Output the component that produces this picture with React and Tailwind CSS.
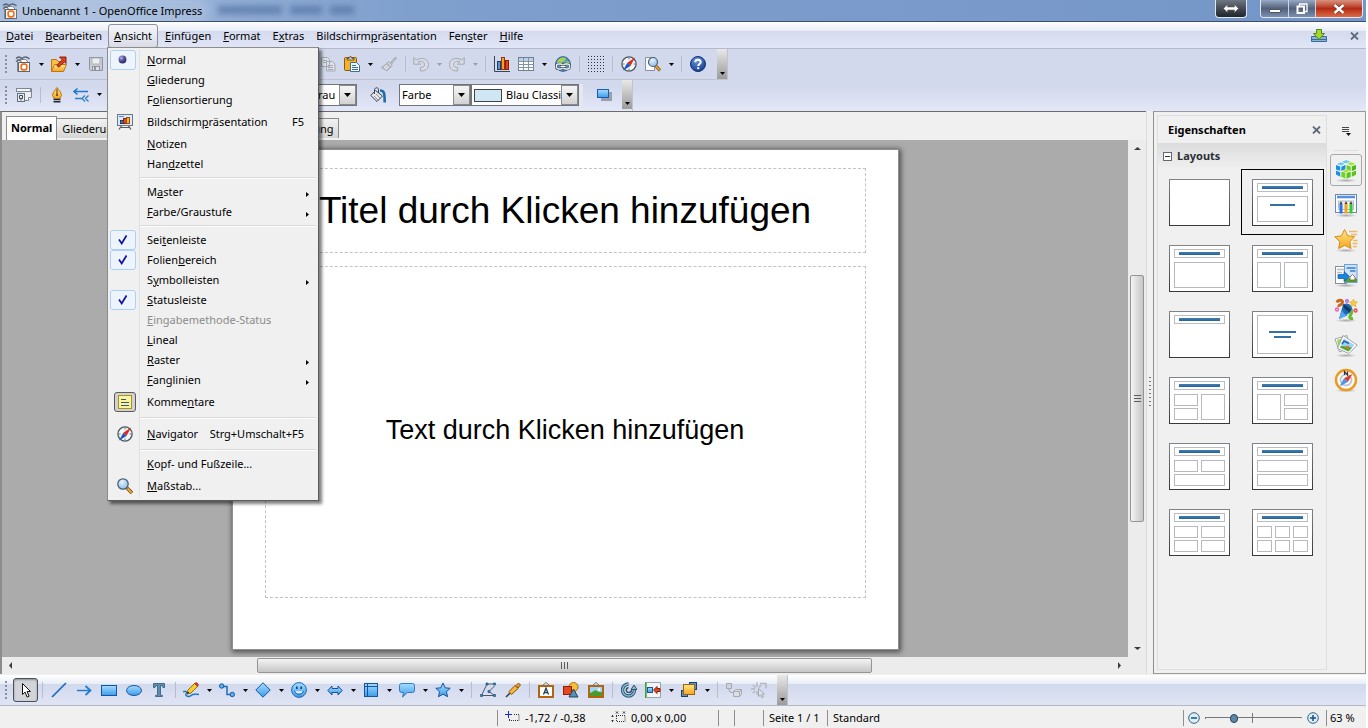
import React from "react";

/* ---------- icon helper ---------- */
function Svg({ s = 16, vb = 16, children, className = "" }) {
  return (
    <svg width={s} height={s} viewBox={`0 0 ${vb} ${vb}`} fill="none" aria-hidden="true" className={"shrink-0 " + className}>
      {children}
    </svg>
  );
}

function Defs() {
  return (
    <svg width="0" height="0" className="absolute" aria-hidden="true">
      <defs>
        <linearGradient id="blue" x1="0" y1="0" x2="0" y2="1">
          <stop offset="0" stopColor="#a5dcff" />
          <stop offset="1" stopColor="#3d9ceb" />
        </linearGradient>
        <linearGradient id="bar" x1="0" y1="0" x2="0" y2="1">
          <stop offset="0" stopColor="#3f7fb5" />
          <stop offset="1" stopColor="#2a6395" />
        </linearGradient>
        <linearGradient id="frame" x1="0" y1="0" x2="0" y2="1">
          <stop offset="0" stopColor="#808488" />
          <stop offset="1" stopColor="#38393b" />
        </linearGradient>
        <linearGradient id="gold" x1="0" y1="0" x2="0" y2="1">
          <stop offset="0" stopColor="#ffe78a" />
          <stop offset="1" stopColor="#f5a61c" />
        </linearGradient>
        <radialGradient id="ball" cx="0.35" cy="0.3" r="0.7">
          <stop offset="0" stopColor="#b9b9ee" />
          <stop offset="0.5" stopColor="#5656a0" />
          <stop offset="1" stopColor="#2a2a66" />
        </radialGradient>
        <radialGradient id="helpball" cx="0.4" cy="0.25" r="0.8">
          <stop offset="0" stopColor="#6a94dc" />
          <stop offset="1" stopColor="#123a8c" />
        </radialGradient>
        <radialGradient id="glass" cx="0.4" cy="0.3" r="0.8">
          <stop offset="0" stopColor="#e6f5ff" />
          <stop offset="1" stopColor="#82b6e4" />
        </radialGradient>
        <radialGradient id="floor">
          <stop offset="0" stopColor="#8a8a8a" stopOpacity="0.7" />
          <stop offset="1" stopColor="#8a8a8a" stopOpacity="0" />
        </radialGradient>
      </defs>
    </svg>
  );
}

const AppIcon = () => (
  <Svg>
    <path d="M2.500 3.500h8l3 3v9h-11z" fill="#fff" stroke="#7b8794" />
    <path d="M1 2.500C3 .5 5 .8 7 2.600 9 .6 12 .8 14.500 2.800" stroke="#5a6672" strokeWidth="1.500" />
    <path d="M1 5.500c2-1.500 4-1.200 5.500 0" stroke="#5a6672" strokeWidth="1.200" />
    <rect x="3.500" y="6.500" width="11" height="9" fill="#fdf0e6" stroke="#5b6670" />
    <rect x="6.200" y="8.200" width="5.600" height="5.600" rx="2" fill="#fff" stroke="#e8731c" strokeWidth="1.700" />
  </Svg>
);
const OpenIcon = () => (
  <Svg>
    <path d="M.5 15.500v-12h5l1.500 2h5v10z" fill="#f7c242" stroke="#b9761a" />
    <path d="M.5 15.500l3-7h12l-3 7z" fill="url(#gold)" stroke="#b9761a" />
    <path d="M6.500 10.500L12 5" stroke="#8f1d0a" strokeWidth="3.400" />
    <path d="M8.500 1h6.500v6.500z" fill="#e0401e" stroke="#8f1d0a" />
    <path d="M7 10l5.500-5.500" stroke="#e0401e" strokeWidth="1.800" />
  </Svg>
);
const SaveIcon = () => (
  <Svg>
    <path d="M1.500 1.500h13v13h-12l-1-1z" fill="#c9ccd3" stroke="#8e939c" />
    <rect x="4" y="2" width="8" height="6" fill="#eceef2" stroke="#9ba0a8" strokeWidth=".7" />
    <rect x="4.500" y="10.500" width="7" height="4" fill="#dfe1e7" stroke="#8e939c" />
    <rect x="6" y="11" width="2" height="3" fill="#8e939c" />
  </Svg>
);
const CopyIcon = () => (
  <Svg>
    <path d="M1.500 1.500h6l2 2v7h-8zM6.500 5.500h6l2.500 2.500v7h-8.500z" fill="#dde0e8" stroke="#a4a9b3" />
    <path d="M8 9.500h5M8 11.500h5M8 13.500h5M3 4.500h4M3 6.500h3" stroke="#a4a9b3" />
  </Svg>
);
const PasteIcon = () => (
  <Svg>
    <rect x=".5" y="1.500" width="12" height="13" rx="1" fill="#f3b22c" stroke="#8c5a10" />
    <path d="M3 4V2.500h2L6.500 0 8 2.500h2V4z" fill="#dcd6c6" stroke="#4a4436" strokeWidth=".8" />
    <path d="M6.500 6.500h6l3 3v6h-9z" fill="#eef5fc" stroke="#44708f" />
    <path d="M8 9.500h4M8 11.500h6M8 13.500h6" stroke="#3f6f9c" />
  </Svg>
);
const BrushIcon = () => (
  <Svg>
    <path d="M10 6l4.500-5 1 1L11 7.500z" fill="#c6c9d0" stroke="#9fa4ad" />
    <path d="M7.500 5.500l4 4-2 1.500-3.500-3.500z" fill="#d6d8de" stroke="#9fa4ad" />
    <path d="M6 7.500L9.500 11 6 15 .5 11.500z" fill="#c6c9d0" stroke="#9fa4ad" />
    <path d="M3 12l3-3M4.500 13.500l3-3" stroke="#eef0f4" />
  </Svg>
);
const UndoIcon = ({ flip }) => (
  <Svg className={flip ? "-scale-x-100" : ""}>
    <path d="M.8 1.500v6.700h6.700L5 5.800c3.500-1.300 6.500 0 6.500 2.700 0 2-1.300 3-4 3v3.500c5 .2 8-2.500 8-6.500C15.500 3 9 .5 3.200 4z" fill="#d9dce3" stroke="#a3a8b2" />
  </Svg>
);
const ChartIcon = () => (
  <Svg>
    <path d="M.5 0v15.500H16" stroke="#3a4652" />
    <rect x="3.500" y="5.500" width="3" height="8" fill="#5a98cc" stroke="#173f66" />
    <rect x="7.500" y="1.500" width="3" height="12" fill="#f5a12a" stroke="#9b3210" />
    <rect x="11.500" y="4.500" width="3" height="9" fill="#e2461c" stroke="#8a200a" />
  </Svg>
);
const TableIcon = () => (
  <Svg>
    <rect x=".5" y="1.500" width="15" height="13" fill="#fff" stroke="#708090" />
    <path d="M1 3.500h14" stroke="#b9d2ea" strokeWidth="3" />
    <path d="M0 5.500h16M0 8.500h16M0 11.500h16M5.500 2v12M10.500 2v12" stroke="#8494a4" />
  </Svg>
);
const LinkIcon = () => (
  <Svg>
    <circle cx="8" cy="8" r="7.300" fill="#4b93d6" stroke="#2a5a8c" />
    <path d="M2 6c1-4 6-5.500 9-4l-1 3-3 1-1 3H3zM11 5l3.500 1v4l-4-1z" fill="#a8d24a" />
    <rect x="1.500" y="8" width="6" height="5" rx="2" stroke="#3c4850" strokeWidth="2.600" />
    <rect x="8.500" y="8" width="6" height="5" rx="2" stroke="#3c4850" strokeWidth="2.600" />
    <rect x="1.500" y="8" width="6" height="5" rx="2" stroke="#eef2f4" strokeWidth="1.300" />
    <rect x="8.500" y="8" width="6" height="5" rx="2" stroke="#eef2f4" strokeWidth="1.300" />
    <path d="M5 10.500h6" stroke="#3c4850" strokeWidth="2.400" />
    <path d="M5.500 10.500h5" stroke="#fff" strokeWidth="1.200" />
  </Svg>
);
const GridIcon = () => (
  <Svg>
    {[0, 1, 2, 3, 4, 5].map((r) => (
      <path key={r} d={`M0 ${r * 3 + 0.5}h16`} stroke="#30343c" strokeDasharray="1 2" />
    ))}
  </Svg>
);
const CompassIcon = () => (
  <Svg>
    <circle cx="8" cy="8" r="7.100" fill="#f4f7fa" stroke="#4e565e" strokeWidth="1.300" />
    <path d="M8 1.500v2M8 12.500v2M1.500 8h2M12.500 8h2" stroke="#6d7780" />
    <path d="M14 1.500L9.500 10 6.300 6.700z" fill="#e02a1c" />
    <path d="M2 14.500L9.500 10 6.300 6.700z" fill="#1f57c4" />
  </Svg>
);
const ZoomPageIcon = () => (
  <Svg>
    <path d="M.5 1.500h9v13H.5z" fill="#fafbfd" stroke="#8a939d" />
    <path d="M10.500 9.500l4.500 5" stroke="#7a4a0c" strokeWidth="3" />
    <path d="M10.500 9.500l4.300 4.800" stroke="#f0ac34" strokeWidth="1.600" />
    <circle cx="8" cy="6" r="4.500" fill="url(#glass)" stroke="#4b6076" strokeWidth="1.200" />
  </Svg>
);
const MagnifierIcon = () => (
  <Svg>
    <path d="M10 10l5 5" stroke="#7a4a0c" strokeWidth="3.400" />
    <path d="M10.500 10.500l4.300 4.300" stroke="#f0ac34" strokeWidth="1.800" />
    <circle cx="6" cy="6" r="5.200" fill="url(#glass)" stroke="#4b5f73" strokeWidth="1.300" />
  </Svg>
);
const HelpIcon = () => (
  <Svg>
    <circle cx="8" cy="8" r="7.500" fill="url(#helpball)" stroke="#0f2f78" />
    <path d="M5.300 6.200C5.400 3 10.800 3 10.700 6.200 10.600 8 8.200 8 8.200 10" stroke="#fff" strokeWidth="2" />
    <rect x="7.200" y="11.200" width="2" height="2" fill="#fff" />
  </Svg>
);
const StylesIcon = () => (
  <Svg>
    <path d="M5 3.500V1.500h10.500v9l-3 3H9" fill="#eef0f3" stroke="#7e8894" />
    <path d="M12.500 13.500v-3h3" fill="#fff" stroke="#7e8894" />
    <rect x=".5" y="1.500" width="14" height="3" fill="#f7f8fa" stroke="#7e8894" />
    <rect x="1.500" y="6.500" width="7" height="8" fill="#e6eaef" stroke="#66717e" />
    <path d="M3.500 8.500h3v3h-3zM5 11v2.500" stroke="#3f4c5a" />
  </Svg>
);
const PenIcon = () => (
  <Svg>
    <path d="M8 .5C6 3 3.500 6 3.500 8.500L5.500 12h5l2-3.500C12.500 6 10 3 8 .5z" fill="url(#gold)" stroke="#b8760c" />
    <path d="M8 2v5" stroke="#5a3a08" />
    <circle cx="8" cy="8" r="1" fill="#5a3a08" />
    <path d="M4.500 12.500h7M4.500 14.700h7" stroke="#1f2a3a" strokeWidth="1.600" />
  </Svg>
);
const ArrowsIcon = () => (
  <Svg>
    <path d="M2 4.500h13M4.500 1.500l-3.500 3 3.500 3" stroke="#1f78c8" strokeWidth="1.500" />
    <path d="M2 11.500h8M12 8.500l-3 3 3 3M15.500 8.500l-3 3 3 3" stroke="#2f7fc4" strokeWidth="1.300" />
  </Svg>
);
const BucketIcon = () => (
  <Svg>
    <path d="M10 3.500c4 0 4.700 2 4.700 12" stroke="#1d6ea8" strokeWidth="2.600" />
    <path d="M5.500 3.500L12.500 9 7 14.500 .8 8.500z" fill="#e4e8ec" stroke="#39444e" />
    <path d="M4 9l4 4M6 7l4 4" stroke="#8d979f" />
    <path d="M4.500 7V2.500C5 .2 8.500.2 8.500 2.500V6" stroke="#39444e" />
  </Svg>
);
const ShadowIcon = () => (
  <Svg>
    <rect x="5" y="5" width="11" height="9" fill="#9aa0ab" />
    <rect x="1.500" y="2.500" width="11" height="8" fill="url(#blue)" stroke="#1a5cb0" />
  </Svg>
);
const SlideshowIcon = () => (
  <Svg>
    <path d="M5 11l-3 4.500M11 11l3 4.500M4 13.500h8" stroke="#555" strokeWidth="1.200" />
    <rect x=".5" y=".5" width="15" height="11" fill="#dceaf7" stroke="#6b7886" />
    <path d="M2 2.500h5" stroke="#4a90d0" />
    <rect x="3.500" y="6.500" width="3" height="3" fill="#3a78b0" stroke="#173f66" />
    <rect x="6.500" y="4.500" width="3" height="5" fill="#e2461c" stroke="#8a200a" />
    <rect x="9.500" y="3.500" width="3" height="6" fill="#f5b12a" stroke="#9b5210" />
  </Svg>
);
const NoteIcon = () => (
  <Svg>
    <rect x="1.500" y="1.500" width="13" height="13" fill="#fbf3a0" stroke="#a8961c" />
    <path d="M4 5.500h5M4 8.500h8M4 11.500h8" stroke="#2f5b74" />
  </Svg>
);
const DownloadIcon = () => (
  <Svg>
    <path d="M.5 8.500h15v5H.5z" fill="#86b4dc" stroke="#3f6a94" />
    <path d="M.5 11.500h15" stroke="#3f6a94" />
    <path d="M5.500 1.500h5v4h3L8 11.500 2.500 5.500h3z" fill="#a6d62e" stroke="#4e8a10" />
  </Svg>
);

/* drawing tools */
const CursorIcon = () => (
  <Svg>
    <path d="M4.500 1.500v11l2.600-2.400 2 5 2-.9-2-4.700h3.400z" fill="#fff" stroke="#111" />
  </Svg>
);
const LineIcon = () => (
  <Svg>
    <path d="M1 15L15 1" stroke="#1c6cc0" strokeWidth="1.700" />
  </Svg>
);
const ArrowIcon = () => (
  <Svg>
    <path d="M1 8.500h13M9.500 4l5 4.500-5 4.500" stroke="#1f7ccf" strokeWidth="1.700" />
  </Svg>
);
const RectIcon = () => (
  <Svg>
    <rect x=".5" y="3.500" width="15" height="10" fill="url(#blue)" stroke="#16549c" />
  </Svg>
);
const EllipseIcon = () => (
  <Svg>
    <ellipse cx="8" cy="8.500" rx="7.500" ry="5" fill="url(#blue)" stroke="#16549c" />
  </Svg>
);
const TextIcon = () => (
  <Svg>
    <path d="M2.500 1.500h11v4h-1.500L11 3.500H9.500v9.500l2 .5v1h-7v-1l2-.5V3.500H5L4 5.500H2.500z" fill="#5b8fb0" stroke="#2f5a78" strokeWidth=".8" />
  </Svg>
);
const CurveIcon = () => (
  <Svg>
    <path d="M0 10c3-2 4 0 3 2s3 3.500 5 1.500 5-1 8-1" stroke="#1f78c8" strokeWidth="1.500" />
    <path d="M4 12l1-4 7-7 3 3-7 7z" fill="#f6cf2e" stroke="#9a6c0c" />
    <path d="M11.500 1.500l3 3 1-2-2-2z" fill="#d9343c" stroke="#a01c24" strokeWidth=".6" />
    <path d="M4 12l.6-2.500L6.500 11z" fill="#222" />
  </Svg>
);
const ConnectorIcon = () => (
  <Svg>
    <path d="M3 4.500h5v8h5" stroke="#1c6cc0" strokeWidth="1.500" />
    <circle cx="2.700" cy="4" r="2.200" fill="#5ab4f2" stroke="#16549c" />
    <circle cx="13.300" cy="12.500" r="2.200" fill="#5ab4f2" stroke="#16549c" />
  </Svg>
);
const DiamondIcon = () => (
  <Svg>
    <path d="M8 .8L15.200 8 8 15.200.8 8z" fill="url(#blue)" stroke="#16549c" />
  </Svg>
);
const SmileyIcon = () => (
  <Svg>
    <circle cx="8" cy="8" r="7.400" fill="url(#blue)" stroke="#1f68b4" />
    <path d="M3.500 9c1.500 4.300 7.500 4.300 9 0" stroke="#145094" fill="#cfeaff" />
    <rect x="5" y="4.500" width="1.600" height="2.500" fill="#0f4384" />
    <rect x="9.400" y="4.500" width="1.600" height="2.500" fill="#0f4384" />
  </Svg>
);
const BlockArrowIcon = () => (
  <Svg>
    <path d="M.8 8.500L5 4v2.500h6V4l4.200 4.500L11 13v-2.500H5V13z" fill="url(#blue)" stroke="#16549c" />
  </Svg>
);
const FlowIcon = () => (
  <Svg>
    <rect x="1.500" y="1.500" width="13" height="13" fill="url(#blue)" stroke="#16549c" />
    <path d="M4.500 2v12M2 4.500h12" stroke="#16549c" />
  </Svg>
);
const CalloutIcon = () => (
  <Svg>
    <path d="M2.500 1.500h11q2 0 2 2v5q0 2-2 2h-5L3.500 15l1-4.500h-2q-2 0-2-2v-5q0-2 2-2z" fill="url(#blue)" stroke="#2a70bc" strokeWidth=".9" />
  </Svg>
);
const StarIcon = () => (
  <Svg>
    <path d="M8 1l2.200 4.800 5 .5-3.800 3.400 1.200 5L8 12.200l-4.600 2.500 1.200-5L.8 6.300l5-.5z" fill="url(#blue)" stroke="#16549c" />
  </Svg>
);
const PointsIcon = () => (
  <Svg>
    <path d="M14.500 2H7L1.500 13.500h13L9 9.500 14.500 4" stroke="#4c5a68" />
    <path d="M6 1h2v2H6zM13.500 1h2v2h-2zM.5 12.500h2v2h-2zM13.500 12.500h2v2h-2zM8 8.500h2v2H8z" fill="#3a8ec8" stroke="#1f4f78" strokeWidth=".7" />
  </Svg>
);
const GlueIcon = () => (
  <Svg>
    <path d="M1 15l4-4" stroke="#3a444e" strokeWidth="1.600" />
    <path d="M4 9.500l6-6L13 6.500l-6.500 6z" fill="#f9b83a" stroke="#8c500c" />
    <path d="M11 3.500L13.500 1 15.500 3 13 6z" fill="#e9a420" stroke="#8c500c" />
  </Svg>
);
const FontworkIcon = () => (
  <Svg>
    <path d="M5 3l3-2.500L11 3" stroke="#6d7780" />
    <rect x="1" y="4" width="14" height="11" fill="#fff" stroke="#b3640e" strokeWidth="2" />
    <path d="M5.500 12.500L8 6l2.500 6.500M6.500 10.500h3" stroke="#26404e" strokeWidth="1.300" />
  </Svg>
);
const GalleryShapesIcon = () => (
  <Svg>
    <circle cx="10.500" cy="5" r="4.500" fill="#f8bf3c" stroke="#a8700c" />
    <rect x=".5" y="4.500" width="8" height="8" fill="#e6481e" stroke="#8a200a" />
    <path d="M10.500 7l4.500 8H6z" fill="#5a8fb4" stroke="#24435c" />
  </Svg>
);
const PictureIcon = () => (
  <Svg>
    <path d="M5 3l3-2.500L11 3" stroke="#6d7780" />
    <rect x="1" y="4" width="14" height="11" fill="#9ed4f6" stroke="#b3640e" strokeWidth="2" />
    <path d="M2 14v-3c3-1 6-4 7-2 1 1 3 1 5 1v4z" fill="#4d9a2c" />
    <circle cx="11" cy="7.500" r="1.300" fill="#fff" />
  </Svg>
);
const RotateIcon = () => (
  <Svg>
    <path d="M13.500 8A6 6 0 1 1 7.500 2" stroke="#2d5670" strokeWidth="3.400" />
    <path d="M13.500 8A6 6 0 1 1 7.500 2" stroke="#86b8d4" strokeWidth="1.500" />
    <path d="M10.500 8a2.600 2.600 0 1 1-3-2.600" stroke="#2d5670" strokeWidth="1.500" />
    <path d="M10 7.500L13 3l3 4.500z" fill="#86b8d4" stroke="#2d5670" />
  </Svg>
);
const AlignIcon = () => (
  <Svg>
    <path d="M2 .5h13.500v15H2" fill="#f2f4f7" stroke="#9aa3ad" />
    <path d="M.8 0v16" stroke="#36a02a" strokeWidth="1.600" />
    <rect x="2.500" y="5.500" width="5" height="5" fill="url(#blue)" stroke="#16549c" />
    <path d="M8.500 8L12 4.500v2h3v3h-3v2z" fill="#e6481e" stroke="#8a200a" />
  </Svg>
);
const OrderIcon = () => (
  <Svg>
    <rect x="8.500" y=".5" width="7" height="7" fill="#4f9ad8" stroke="#1d3f64" />
    <rect x=".5" y="8.500" width="6" height="6" fill="#4f9ad8" stroke="#1d3f64" />
    <rect x="2.500" y="2.500" width="11" height="10" fill="url(#gold)" stroke="#a06010" />
  </Svg>
);
const ExtrudeIcon = () => (
  <Svg>
    <path d="M.5 1.500h5v5h-5zM3 7c0 3 1 3.500 4 3.500" fill="#d0d3da" stroke="#a4a9b2" />
    <path d="M7.500 9.500l2-2h6v5l-2 2h-6zM7.500 9.500h6v5M13.500 9.500l2-2" fill="#dcdee4" stroke="#a4a9b2" />
  </Svg>
);
const InteractIcon = () => (
  <Svg>
    <path d="M6 0v5M6 9v4M0 7h4M2 3l2.500 2.500M10 3L8 5.500M2 11l2-2" stroke="#b0b4bd" strokeWidth="1.300" />
    <path d="M9 1.500h6v5" stroke="#b4b8c1" strokeWidth="1.500" />
    <path d="M7.500 6.500v8l2-1.500 1.500 3 1.500-1-1.500-3h2.500z" fill="#dfe1e7" stroke="#a4a9b2" />
  </Svg>
);

/* sidebar icons */
const Floor = () => <ellipse cx="12" cy="22.500" rx="11" ry="1.800" fill="url(#floor)" />;
const CubesIcon = () => (
  <Svg s={24} vb={24}>
    <Floor />
    <path d="M2 5.500L12 1.500 22 5.500V16L12 21 2 16z" fill="#fff" />
    <path d="M2.500 6l4-1.700 4.500 1.500-4.200 1.900zM7.500 4l4.500-2 4.500 1.600-4.500 1.800z" fill="#6ccaf8" />
    <path d="M12.800 5.700L17 4l4.600 1.700-4.400 2z" fill="#a4e23c" />
    <path d="M2 7l4.300 1.600v4.500L2 11.500zM7.300 8.800l4.200-2v4.300l-4.200 2z" fill="#1d8ee6" />
    <path d="M2 12.600l4.300 1.700v4.500L2 16.600z" fill="#1d8ee6" />
    <path d="M12.500 7l4.200 1.600v4.500l-4.200-1.800z" fill="#6ccc28" />
    <path d="M17.700 8.600L22 6.800v4.500l-4.300 1.900z" fill="#4cb81a" />
    <path d="M7.300 13.500l4.200 1.300v5.900l-4.200-2z" fill="#76d028" />
    <path d="M8 12.900l3.800-1.700 4.200 1.600-4 1.600z" fill="#a4e23c" />
    <path d="M12.500 15l4.200-1.500v5.400l-4.200 1.900zM17.700 14.300L22 12.400v4.300l-4.300 2z" fill="#5bc41c" />
  </Svg>
);
const MasterIcon = () => (
  <Svg s={24} vb={24}>
    <Floor />
    <rect x="1.500" y="1.500" width="21" height="18" fill="#fdfeff" stroke="#6d8cb4" />
    <path d="M3 4h18" stroke="#5a90dc" strokeWidth="2.600" />
    <path d="M4.500 8v8.500h15V8z" fill="#e6edf6" stroke="#a9bbd2" />
    <path d="M7 11v9.500" stroke="#2f74dc" strokeWidth="3" />
    <path d="M12 11v9.500" stroke="#f0a41c" strokeWidth="3" />
    <path d="M17 11v9.500" stroke="#38c828" strokeWidth="3" />
    <path d="M5.500 11L7 8l1.500 3zM10.500 11L12 8l1.500 3zM15.500 11L17 8l1.500 3z" fill="#5b3b22" />
  </Svg>
);
const GoldStarIcon = () => (
  <Svg s={24} vb={24}>
    <Floor />
    <path d="M15 3.500h8.500M17 6.500h6M19 12.500h4.500M18.500 15.500h5M19 18.500h4" stroke="#f3b866" strokeWidth="1.300" />
    <path d="M10.500 1.500l3.200 6.300 6.800.9-4.700 5 1.200 6.800-6.200-3.200L4.600 20.500l1.200-6.800L.8 8.800l6.800-1z" fill="url(#gold)" stroke="#d98e14" />
  </Svg>
);
const TransitionIcon = () => (
  <Svg s={24} vb={24}>
    <Floor />
    <rect x="1.500" y="3.500" width="11" height="17" fill="#fff" stroke="#8a8f96" />
    <path d="M3 6.500h7M3 9.500h5" stroke="#b7bcc4" strokeWidth="1.500" />
    <rect x="10.500" y="1.500" width="12.500" height="18" fill="#cfe4fb" stroke="#6a9fe0" />
    <path d="M12.500 5h9M16 8h5.500" stroke="#5a96e6" strokeWidth="2" />
    <path d="M11 19v-4c4 1 8-2 12 1v3z" fill="#56a030" />
    <path d="M16 14l2.500-2.500L21 14v3h-5z" fill="#fff" stroke="#8a5a2a" strokeWidth=".8" />
    <path d="M4 11.500h6v-3l5.500 5-5.500 5v-3H4z" fill="#1784dc" stroke="#0c58a0" strokeWidth=".7" />
  </Svg>
);
const AnimationIcon = () => (
  <Svg s={24} vb={24}>
    <Floor />
    <path d="M3 4.500C4 1.500 9 1.500 8.500 4.500S4 6.500 5 9" stroke="#c8681c" strokeWidth="3" />
    <path d="M9 6.500c5-3 10 1 9.500 7L5 21z" fill="#1e6cb8" />
    <path d="M9 6.500c3 0 8 4 9 8C14 14 9 11 9 6.500z" fill="#123a66" />
    <path d="M5 21l3-9c1 3 3 5 6 5.500z" fill="#4fa8ec" />
    <path d="M19 20.500c-3 .5-4-1-2.500-3.500s1-3.500 0-4" stroke="#6cb82c" strokeWidth="3.200" />
    <path d="M19.500 1l1.200 2.600 2.800.3-2 2 .5 2.800-2.500-1.400L17 8.700l.5-2.800-2-2 2.800-.3z" fill="#f8cc3c" stroke="#d69a18" strokeWidth=".5" />
    <circle cx="13" cy="3" r="2" fill="#b060e0" />
    <circle cx="3" cy="11.500" r="2.200" fill="#e868c0" />
    <circle cx="21.500" cy="12.500" r="2.200" fill="#f05050" />
    <path d="M13 2.500v1M3 11v1M21.500 12v1" stroke="#fff" />
  </Svg>
);
const GalleryIcon = () => (
  <Svg s={24} vb={24}>
    <Floor />
    <path d="M1 6l12-3.500 2 12L5.500 19z" fill="#fff" stroke="#9da3aa" />
    <path d="M3 7l8-2.500 1 3-8 5z" fill="#96dc3c" />
    <path d="M9 2.500L23.200 12 15 20.500 3.500 15.500z" fill="#fff" stroke="#9da3aa" />
    <path d="M10 5.500l10.500 6.500-6 6.500-8.500-4z" fill="#9bd2fa" />
    <path d="M7 13c4 0 7 1 11 1.500l-3.500 4L6 14.500z" fill="#5aa52c" />
    <path d="M8 11l2-3 5 2.500" stroke="#1d62b4" strokeWidth="1.500" />
    <circle cx="13.500" cy="14" r="1.500" fill="#e0702c" />
  </Svg>
);
const NavigatorIcon = () => (
  <Svg s={24} vb={24}>
    <Floor />
    <circle cx="12" cy="12" r="10" fill="#f6f8fa" stroke="#ee9a1c" strokeWidth="2.400" />
    <circle cx="12" cy="12" r="5.500" stroke="#b9bfc6" strokeWidth="1.500" />
    <path d="M18.500 6L13.800 14 10 10.300z" fill="#e0382c" />
    <path d="M5.500 18.500L13.800 14 10 10.300z" fill="#4a94ec" />
    <path d="M10.500 7V3.500l3 3.500V3.500" stroke="#333" strokeWidth="1.200" />
  </Svg>
);

/* ---------- building blocks ---------- */
function Caret({ dim }) {
  return (
    <svg width="5" height="3" viewBox="0 0 5 3" aria-hidden="true">
      <path d="M0 0h5L2.500 3z" fill={dim ? "#9a9ea8" : "#000"} />
    </svg>
  );
}
function Tool({ label, icon: Icon, drop, dim, active, flip }) {
  return (
    <>
      <button
        type="button"
        aria-label={label}
        className={
          "flex h-6 shrink-0 items-center justify-center rounded-[3px] " +
          (drop ? "w-6 " : "w-[25px] ") +
          (active ? "border border-[#4c4f57] bg-[#d3d4d9] shadow-[inset_0_1px_2px_#8a8c94]" : "")
        }
      >
        <Icon flip={flip} />
      </button>
      {drop && (
        <button type="button" aria-label={label + " – Auswahl"} className="flex h-6 w-3 shrink-0 items-center justify-center">
          <Caret dim={dim} />
        </button>
      )}
    </>
  );
}
function Sep() {
  return (
    <span className="flex w-2 shrink-0 justify-center">
      <span className="h-4 w-px bg-[#b9bdc9]" />
    </span>
  );
}
function Grip() {
  return <span className="mr-[3px] ml-[5px] h-[18px] w-[2px] shrink-0 bg-[repeating-linear-gradient(to_bottom,#8a8f9c_0,#8a8f9c_2px,transparent_2px,transparent_4px)]" />;
}
function End({ label }) {
  return (
    <button type="button" aria-label={label} className="flex w-[10px] shrink-0 items-end justify-center self-stretch bg-linear-to-b from-[#e9e9ea] to-[#9b9b9b] pb-1">
      <Caret />
    </button>
  );
}
function U({ t }) {
  const [a, b, c] = t.split("_");
  if (b === undefined) return t;
  return (
    <>
      {a}
      <span className="underline underline-offset-1">{b}</span>
      {c}
    </>
  );
}

const menus = ["_D_atei", "_B_earbeiten", "_A_nsicht", "_E_infügen", "_F_ormat", "E_x_tras", "Bildschirm_p_räsentation", "Fen_s_ter", "_H_ilfe"];

const viewMenu = [
  { t: "_N_ormal", mark: "radio" },
  { t: "_G_liederung" },
  { t: "F_o_liensortierung" },
  { t: "Bildschirm_p_räsentation", icon: SlideshowIcon, key: "F5" },
  { t: "_N_otizen" },
  { t: "Han_d_zettel" },
  null,
  { t: "M_a_ster", sub: true },
  { t: "_F_arbe/Graustufe", sub: true },
  null,
  { t: "Sei_t_enleiste", mark: "check" },
  { t: "Folien_b_ereich", mark: "check" },
  { t: "S_y_mbolleisten", sub: true },
  { t: "_S_tatusleiste", mark: "check" },
  { t: "_E_ingabemethode-Status", off: true },
  { t: "_L_ineal" },
  { t: "_R_aster", sub: true },
  { t: "_F_anglinien", sub: true },
  { t: "Komme_n_tare", icon: NoteIcon, pressed: true },
  null,
  { t: "_N_avigator", icon: CompassIcon, key: "Strg+Umschalt+F5" },
  null,
  { t: "_K_opf- und Fußzeile..." },
  { t: "_M_aßstab...", icon: MagnifierIcon },
];

function ViewMenu() {
  return (
    <div role="menu" className="absolute top-full -left-[2px] z-20 w-[212px] border border-[#8c8c8c] border-r-[#5c5c5c] border-b-[#5c5c5c] bg-[#f0f0f0] py-[2px] shadow-[3px_3px_3px_rgba(0,0,0,0.5)]">
      {viewMenu.map((m, i) =>
        m === null ? (
          <div key={i} role="separator" className="flex h-2 items-center">
            <span className="h-full w-8 border-r border-[#e0e0e0]" />
            <span className="mr-[2px] h-[2px] flex-1 border-t border-[#d9d9d9] bg-white" />
          </div>
        ) : (
          <button key={i} type="button" role="menuitem" disabled={m.off} className={"flex w-full items-center text-left " + (m.icon ? "h-6 " : "h-5 ") + (m.off ? "text-[#8b8b8b]" : "")}>
            <span className="flex h-full w-8 shrink-0 items-center border-r border-[#e0e0e0] pl-[2px]">
              {m.mark && (
                <span className="flex h-5 w-[26px] items-center justify-center rounded-[3px] border border-[#aed0f7] bg-[#eef4fb]">
                  <svg width="10" height="10" viewBox="0 0 10 10" fill="none" aria-hidden="true">
                    {m.mark === "radio" ? <circle cx="4.500" cy="4.500" r="3.900" fill="url(#ball)" /> : <path d="M1 4.500l2.700 4L8.500.5" stroke="#1010a8" strokeWidth="1.700" />}
                  </svg>
                </span>
              )}
              {m.icon && (
                <span className={"ml-1 flex h-5 w-[22px] items-center justify-center " + (m.pressed ? "rounded-[3px] border border-[#5a5a5a] bg-[#d2d2d2]" : "")}>
                  <m.icon />
                </span>
              )}
            </span>
            <span className="flex-1 pl-[7px] whitespace-nowrap">
              <U t={m.t} />
            </span>
            {m.key && <span className="pr-[14px] whitespace-nowrap">{m.key}</span>}
            {m.sub && (
              <svg width="3" height="5" viewBox="0 0 3 5" className="mt-1 mr-[9px]" aria-hidden="true">
                <path d="M0 0l3 2.500L0 5z" fill="#000" />
              </svg>
            )}
          </button>
        )
      )}
    </div>
  );
}

function TitleBar() {
  return (
    <header className="flex h-[22px] items-start overflow-hidden border-b border-[#3f4e66] bg-linear-to-r from-[#a9bfdf] via-[#7f9fcd] via-30% to-[#7496c8]">
      <div className="flex h-[21px] items-center gap-1 pl-[2px]">
        <AppIcon />
        <h1 className="rounded-full bg-white/15 font-normal shadow-[0_0_12px_6px_rgba(255,255,255,0.2)]">Unbenannt 1 - OpenOffice Impress</h1>
      </div>
      <div className="ml-4 flex gap-2 pt-[6px] opacity-70 blur-[3px]" aria-hidden="true">
        <span className="h-2 w-[64px] bg-[#4f6f9f]" />
        <span className="h-2 w-8 bg-[#4f6f9f]" />
        <span className="h-2 w-6 bg-[#4f6f9f]" />
      </div>
      <div className="ml-auto flex pr-[3px]">
        <button type="button" aria-label="Anzeigen" className="mr-[13px] flex h-[18px] w-8 items-center justify-center rounded-b-[4px] border border-t-0 border-[#dfe8f4] bg-linear-to-b from-[#6f7784] to-[#20242b]">
          <svg width="16" height="9" viewBox="0 0 16 9" aria-hidden="true">
            <path d="M.5 4.500L4.500.5V3h7V.5l4 4-4 4V6h-7v2.500z" fill="#fff" stroke="#555" strokeWidth=".5" />
          </svg>
        </button>
        <div className="flex h-[18px] overflow-hidden rounded-b-[4px] border border-t-0 border-[#dfe8f4]">
          <button type="button" aria-label="Minimieren" className="flex w-7 items-center justify-center border-r border-[#cdd6e4] bg-linear-to-b from-[#97a9c5] via-[#53617a] to-[#7d90b2]">
            <span className="mt-1 h-1 w-3 rounded-[1px] border border-[#4a5568] bg-white" />
          </button>
          <button type="button" aria-label="Wiederherstellen" className="flex w-[27px] items-center justify-center border-r border-[#cdd6e4] bg-linear-to-b from-[#97a9c5] via-[#53617a] to-[#7d90b2]">
            <svg width="12" height="12" viewBox="0 0 12 12" fill="none" aria-hidden="true">
              <path d="M3.500 3V1h7.500v7.500H9" stroke="#fff" strokeWidth="1.300" />
              <rect x="1.500" y="3.500" width="6.500" height="6.500" stroke="#fff" strokeWidth="2" />
            </svg>
          </button>
          <button type="button" aria-label="Schließen" className="flex w-[46px] items-center justify-center bg-linear-to-b from-[#d9917f] via-[#b42a12] to-[#dc6a48]">
            <svg width="12" height="10" viewBox="0 0 12 10" fill="none" aria-hidden="true">
              <path d="M1.500 1l9 8M10.500 1l-9 8" stroke="#5b2a22" strokeWidth="3.600" />
              <path d="M1.500 1l9 8M10.500 1l-9 8" stroke="#fff" strokeWidth="2.400" />
            </svg>
          </button>
        </div>
      </div>
    </header>
  );
}

function CloseX() {
  return (
    <svg width="9" height="8" viewBox="0 0 9 8" aria-hidden="true">
      <path d="M1 .5l7 7M8 .5l-7 7" stroke="#5e6a78" strokeWidth="1.800" />
    </svg>
  );
}

function MenuBar() {
  return (
    <nav className="flex h-[27px] items-center border-b border-[#b4bacb] bg-[linear-gradient(to_bottom,#ffffff_0%,#e9edf6_33%,#d5dbee_34%,#e0e6f6_100%)] pt-[2px]">
      {menus.map((m) =>
        m === "_A_nsicht" ? (
          <div key={m} className="relative mr-px flex h-6 w-[50px] items-center justify-center rounded-[3px] border border-[#8b909c] bg-linear-to-b from-[#f4f5f9] to-[#d9dce6]">
            <button type="button" aria-haspopup="menu" aria-expanded="true">
              <U t={m} />
            </button>
            <ViewMenu />
          </div>
        ) : (
          <button key={m} type="button" className="px-[6px]">
            <U t={m} />
          </button>
        )
      )}
      <div className="ml-auto flex items-center gap-[23px] pr-[7px]">
        <button type="button" aria-label="Update verfügbar">
          <DownloadIcon />
        </button>
        <button type="button" aria-label="Dokument schließen">
          <CloseX />
        </button>
      </div>
    </nav>
  );
}

function Combo({ label, options, className, pad = "pl-[2px]", swatch }) {
  return (
    <label className={"relative flex h-[22px] shrink-0 border border-[#70747e] bg-white " + className}>
      <span className="sr-only">{label}</span>
      {swatch && <span className="absolute top-1 left-[2px] h-[13px] w-7 border border-[#444] bg-[#cfe7f5]" />}
      <select className={"w-full appearance-none bg-transparent pr-[17px] outline-none " + pad}>
        {options.map((o) => (
          <option key={o}>{o}</option>
        ))}
      </select>
      <span className="pointer-events-none absolute top-0 right-0 flex h-5 w-[17px] items-center justify-center border border-[#8a8a8a] bg-linear-to-b from-[#f6f6f6] to-[#d2d2d2]">
        <svg width="7" height="4" viewBox="0 0 7 4" aria-hidden="true">
          <path d="M0 0h7L3.500 4z" fill="#000" />
        </svg>
      </span>
    </label>
  );
}

function Toolbars() {
  return (
    <div className="bg-linear-to-b from-[#d3d9ec] from-60% to-[#e2e8f8]">
      <div className="flex h-[31px] w-[728px] items-center border-r border-b border-[#bfc3cf]">
        <Grip />
        <span className="w-px" />
        <Tool label="Neu" icon={AppIcon} drop />
        <Tool label="Öffnen" icon={OpenIcon} drop />
        <Tool label="Speichern" icon={SaveIcon} />
        <span className="flex-1" />
        <Tool label="Kopieren" icon={CopyIcon} />
        <Tool label="Einfügen" icon={PasteIcon} drop />
        <Tool label="Format übertragen" icon={BrushIcon} />
        <Sep />
        <Tool label="Rückgängig" icon={UndoIcon} drop dim />
        <Tool label="Wiederherstellen" icon={UndoIcon} flip drop dim />
        <Sep />
        <Tool label="Diagramm" icon={ChartIcon} />
        <Tool label="Tabelle" icon={TableIcon} drop />
        <Tool label="Hyperlink" icon={LinkIcon} />
        <Sep />
        <Tool label="Raster anzeigen" icon={GridIcon} />
        <Sep />
        <Tool label="Navigator" icon={CompassIcon} />
        <Tool label="Maßstab" icon={ZoomPageIcon} drop />
        <Sep />
        <Tool label="Hilfe" icon={HelpIcon} />
        <span className="w-[7px]" />
        <End label="Symbolleiste anpassen" />
      </div>
      <div className="flex h-[31px] w-[633px] items-center border-r border-[#bfc3cf] pb-[2px]">
        <Grip />
        <span className="w-px" />
        <Tool label="Formatvorlagen" icon={StylesIcon} />
        <Sep />
        <Tool label="Linie" icon={PenIcon} />
        <Tool label="Linienenden" icon={ArrowsIcon} drop />
        <span className="flex-1" />
        <Combo label="Linienfarbe" options={["Grau", "Rot", "Weiß"]} className="w-[60px]" pad="pl-[12px]" />
        <span className="w-[8px]" />
        <Tool label="Fläche" icon={BucketIcon} />
        <span className="w-[9px]" />
        <Combo label="Flächenstil" options={["Farbe", "Bitmap"]} className="w-[72px]" />
        <Combo label="Flächenfarbe" options={["Blau Classic", "Schwarz", "Weiß"]} className="w-[108px]" pad="pl-[34px]" swatch />
        <span className="mr-2 h-[22px] w-1 bg-[#e6e8ee]" />
        <Tool label="Schatten" icon={ShadowIcon} />
        <span className="w-[6px]" />
        <End label="Symbolleiste anpassen" />
      </div>
    </div>
  );
}

function ViewTabs() {
  return (
    <div role="tablist" className="flex h-[28px] items-end pl-[4px]">
      <button type="button" role="tab" aria-selected="true" className="h-[24px] border border-b-0 border-[#8b8b8b] bg-white px-[4px] pb-[2px] font-bold">
        Normal
      </button>
      <div className="flex w-[282px] pb-[2px]">
        {["Gliederung", "Notizen", "Handzettel", "Foliensortierung"].map((t) => (
          <button key={t} type="button" role="tab" aria-selected="false" className="h-5 shrink-0 grow border-t border-r border-[#8b8b8b] bg-linear-to-b from-[#f2f2f2] to-[#d6d6d6] px-[2px]">
            {t}
          </button>
        ))}
      </div>
    </div>
  );
}

function ScrollThumbGrip({ vertical }) {
  return (
    <span className={"flex gap-[2px] " + (vertical ? "flex-col" : "")}>
      {[0, 1, 2].map((i) => (
        <span key={i} className={(vertical ? "h-px w-[7px]" : "h-[7px] w-px") + " bg-[#5d5d5d]"} />
      ))}
    </span>
  );
}
function Tri({ d }) {
  return (
    <svg width="7" height="7" viewBox="0 0 7 7" aria-hidden="true">
      <path d={d} fill="#3c3c3c" />
    </svg>
  );
}

function Editor() {
  return (
    <section className="flex min-w-0 flex-1 flex-col border-t border-l-2 border-t-[#6b6b6b] border-l-[#8d8d8d] bg-[#f0f0f0]">
      <ViewTabs />
      <div className="flex flex-1">
        <div className="flex flex-1 justify-center overflow-hidden bg-[#ababab] pt-[9px] pb-[7px]">
          <article className="flex aspect-[4/3] w-[667px] flex-col gap-[13px] border border-[#8f8f8f] bg-white px-8 pt-[18px] shadow-[1px_1px_5px_1px_rgba(0,0,0,0.55)]">
            <h2 className="flex h-[85px] items-center justify-center border border-dashed border-[#c3c3c3] font-['Liberation_Sans',Arial,sans-serif] text-[37px] whitespace-nowrap">Titel durch Klicken hinzufügen</h2>
            <p className="flex h-[332px] items-center justify-center border border-dashed border-[#c3c3c3] pb-1 font-['Liberation_Sans',Arial,sans-serif] text-[27px] whitespace-nowrap">Text durch Klicken hinzufügen</p>
          </article>
        </div>
        <div className="flex w-[18px] flex-col items-center bg-[#ececec]">
          <button type="button" aria-label="Nach oben" className="flex h-[17px] items-center">
            <Tri d="M0 5h7L3.500 2z" />
          </button>
          <div className="flex-[118]" />
          <div className="flex w-[14px] flex-[246] items-center justify-center rounded-[2px] border border-[#949494] bg-linear-to-r from-[#f4f4f4] to-[#c6c6c8]">
            <ScrollThumbGrip vertical />
          </div>
          <div className="flex-[119]" />
          <button type="button" aria-label="Nach unten" className="flex h-[17px] items-center">
            <Tri d="M0 2h7L3.500 5z" />
          </button>
        </div>
      </div>
      <div className="flex h-[17px] items-center bg-[#ececec] pr-[18px]">
        <button type="button" aria-label="Nach links" className="flex w-[17px] justify-center">
          <Tri d="M5 0v7L2 3.500z" />
        </button>
        <div className="flex-[239]" />
        <div className="flex h-[15px] flex-[614] items-center justify-center rounded-[2px] border border-[#949494] bg-linear-to-b from-[#f4f4f4] to-[#c6c6c8]">
          <ScrollThumbGrip />
        </div>
        <div className="flex-[240]" />
        <button type="button" aria-label="Nach rechts" className="flex w-[17px] justify-center">
          <Tri d="M2 0v7L5 3.500z" />
        </button>
      </div>
    </section>
  );
}

const L = [5, 24];
const R = [32, 24];
const W = [5, 51];
const layouts = [
  { name: "Leer", boxes: [] },
  { name: "Titelfolie", bar: true, boxes: [[...W, 17, 26]], lines: [[18, 25, 25, 2]] },
  { name: "Titel, Inhalt", bar: true, boxes: [[...W, 17, 26]] },
  { name: "Titel und 2 Inhalte", bar: true, boxes: [[...L, 17, 26], [...R, 17, 26]] },
  { name: "Nur Titel", bar: true, boxes: [] },
  { name: "Zentrierter Text", boxes: [[...W, 4, 39]], lines: [[17, 20, 27, 2], [22, 25, 17, 2]] },
  { name: "Titel, 2 Inhalte und Inhalt", bar: true, boxes: [[...L, 17, 12], [...L, 31, 12], [...R, 17, 26]] },
  { name: "Titel, Inhalt und 2 Inhalte", bar: true, boxes: [[...L, 17, 26], [...R, 17, 12], [...R, 31, 12]] },
  { name: "Titel, 2 Inhalte über Inhalt", bar: true, boxes: [[...L, 17, 12], [...R, 17, 12], [...W, 31, 12]] },
  { name: "Titel, Inhalt über Inhalt", bar: true, boxes: [[...W, 17, 12], [...W, 31, 12]] },
  { name: "Titel, 4 Inhalte", bar: true, boxes: [[...L, 17, 12], [...R, 17, 12], [...L, 31, 12], [...R, 31, 12]] },
  { name: "Titel, 6 Inhalte", bar: true, boxes: [5, 23, 41].flatMap((x) => [[x, 15, 17, 12], [x, 15, 31, 12]]) },
];

function Thumb({ l }) {
  return (
    <svg width="61" height="47" viewBox="0 0 61 47" aria-hidden="true">
      <rect x=".5" y=".5" width="60" height="46" fill="#fff" stroke="url(#frame)" />
      {l.bar && (
        <>
          <rect x="5.500" y="4.500" width="50" height="8" fill="#fff" stroke="#b9bdc6" />
          <rect x="10" y="7" width="41" height="3" fill="url(#bar)" />
        </>
      )}
      {l.boxes.map(([x, w, y, h], i) => (
        <rect key={i} x={x + 0.5} y={y + 0.5} width={w - 1} height={h - 1} fill="#fff" stroke="#b7b9bd" />
      ))}
      {l.lines && l.lines.map(([x, y, w, h], i) => <rect key={i} x={x} y={y} width={w} height={h} fill="#3472a6" />)}
    </svg>
  );
}

const sideTabs = [
  ["Eigenschaften", CubesIcon],
  ["Folienmaster", MasterIcon],
  ["Benutzerdefinierte Animation", GoldStarIcon],
  ["Folienübergang", TransitionIcon],
  ["Formatvorlagen", AnimationIcon],
  ["Gallery", GalleryIcon],
  ["Navigator", NavigatorIcon],
];

function Sidebar() {
  return (
    <aside className="flex w-[220px] shrink-0 bg-[#f0f0f0]">
      <div className="flex w-[8px] items-center justify-center border-r border-l border-r-[#8f8f8f] border-l-[#dcdcdc]">
        <span className="h-8 w-[2px] bg-[repeating-linear-gradient(to_bottom,#777_0,#777_1px,transparent_1px,transparent_4px)]" />
      </div>
      <div className="flex flex-1 border-t border-r border-b border-[#9a9a9a]">
        <div className="my-[3px] ml-[3px] flex w-[170px] flex-col border border-[#dedede]">
          <div className="flex h-[27px] items-center justify-between pr-[5px] pl-[10px]">
            <h2 className="font-bold">Eigenschaften</h2>
            <button type="button" aria-label="Seitenleiste schließen">
              <CloseX />
            </button>
          </div>
          <h3 className="flex h-[26px] items-center gap-[5px] bg-linear-to-b from-[#dcdcdc] to-[#f0f0f0] pl-[5px] font-bold text-[#2b2f36]">
            <button type="button" aria-label="Layouts einklappen" className="flex h-[9px] w-[9px] items-center justify-center border border-[#5f6a76] bg-white">
              <span className="h-px w-[5px] bg-[#333]" />
            </button>
            Layouts
          </h3>
          <div className="grid auto-rows-[66px] grid-cols-2 pr-[2px]">
            {layouts.map((l, i) => (
              <button key={l.name} type="button" aria-label={l.name} className={"flex items-center justify-center " + (i === 1 ? "border border-black" : "")}>
                <Thumb l={l} />
              </button>
            ))}
          </div>
        </div>
        <div className="flex flex-1 flex-col items-center">
          <button type="button" aria-label="Einstellungen der Seitenleiste" className="flex h-[38px] items-center">
            <svg width="9" height="9" viewBox="0 0 9 9" aria-hidden="true">
              <path d="M0 .5h7M0 2.500h7M0 4.500h7" stroke="#333" strokeWidth=".9" />
              <path d="M4 6h5L6.500 9z" fill="#111" />
            </svg>
          </button>
          <div className="mb-[3px] w-6 border-t border-[#dedede]" />
          <div className="flex flex-col gap-[3px]">
            {sideTabs.map(([n, Icon], i) => (
              <button key={n} type="button" aria-label={n} className={"flex h-8 w-8 items-center justify-center rounded-[3px] " + (i === 0 ? "border border-[#a9a9a9]" : "")}>
                <Icon />
              </button>
            ))}
          </div>
        </div>
      </div>
    </aside>
  );
}

function DrawBar() {
  return (
    <div className="mt-px flex h-[31px] border-b border-[#b4b8c4] bg-[linear-gradient(to_bottom,#ffffff_0%,#e9edf6_30%,#d3d9ed_31%,#e0e5f5_100%)]">
      <div className="flex w-[788px] items-center border-r border-[#bfc3cf]">
        <Grip />
        <span className="w-[3px]" />
        <Tool label="Auswahl" icon={CursorIcon} active />
        <Sep />
        <Tool label="Linie" icon={LineIcon} />
        <Tool label="Pfeil" icon={ArrowIcon} />
        <Tool label="Rechteck" icon={RectIcon} />
        <Tool label="Ellipse" icon={EllipseIcon} />
        <Tool label="Text" icon={TextIcon} />
        <Sep />
        <Tool label="Kurve" icon={CurveIcon} drop />
        <Tool label="Verbinder" icon={ConnectorIcon} drop />
        <Tool label="Standardformen" icon={DiamondIcon} drop />
        <Tool label="Symbolformen" icon={SmileyIcon} drop />
        <Tool label="Blockpfeile" icon={BlockArrowIcon} drop />
        <Tool label="Flussdiagramm" icon={FlowIcon} drop />
        <Tool label="Legenden" icon={CalloutIcon} drop />
        <Tool label="Sterne" icon={StarIcon} drop />
        <Sep />
        <Tool label="Punkte bearbeiten" icon={PointsIcon} />
        <Tool label="Klebepunkte" icon={GlueIcon} />
        <Sep />
        <Tool label="Fontwork" icon={FontworkIcon} />
        <Tool label="Gallery" icon={GalleryShapesIcon} />
        <Tool label="Bild aus Datei" icon={PictureIcon} />
        <Sep />
        <Tool label="Drehen" icon={RotateIcon} />
        <Tool label="Ausrichtung" icon={AlignIcon} drop />
        <Tool label="Anordnung" icon={OrderIcon} drop />
        <Sep />
        <Tool label="Extrusion" icon={ExtrudeIcon} />
        <Tool label="Interaktion" icon={InteractIcon} />
        <span className="flex-1" />
        <End label="Symbolleiste anpassen" />
      </div>
    </div>
  );
}

function StatusBar() {
  const cell = "flex h-4 items-center border-l border-[#8f8f8f] ";
  return (
    <footer className="flex h-[22px] items-center bg-[#f0f0f0] pt-[2px]">
      <div className="w-[497px]" />
      <div className={cell + "w-[221px] pl-[7px]"}>
        <svg width="16" height="14" viewBox="0 0 16 14" fill="none" aria-hidden="true">
          <path d="M3.500 0v7M0 3.500h7" stroke="#1c2cc8" />
          <path d="M4 9.500h10v-6H8M4.500 9V7" stroke="#333" strokeDasharray="1 1" />
        </svg>
        <span className="w-[90px] pl-1">-1,72 / -0,38</span>
        <svg width="16" height="14" viewBox="0 0 16 14" fill="none" aria-hidden="true">
          <path d="M5 4.500h9v6H5.500V4" stroke="#333" strokeDasharray="1 1" />
          <path d="M1.500 4v2M1.500 9v2M.5 5.500h2M.5 9.500h2M5 .5l2 2M7 .5l-2 2M12 .5l2 2M14 .5l-2 2" stroke="#333" />
        </svg>
        <span className="pl-1">0,00 x 0,00</span>
      </div>
      <div className={cell + "w-4"} />
      <div className={cell + "w-[29px]"} />
      <div className={cell + "w-[64px] pl-[5px]"}>Seite 1 / 1</div>
      <div className={cell + "flex-1 pl-[5px]"}>Standard</div>
      <div className={cell + "w-[143px] gap-[5px] pl-[4px]"}>
        <button type="button" aria-label="Verkleinern">
          <Svg s={12} vb={12}>
            <circle cx="6" cy="6" r="5.300" fill="#d8effc" stroke="#3f5f7c" />
            <path d="M3 6h6" stroke="#1c4f7c" strokeWidth="1.500" />
          </Svg>
        </button>
        <div className="relative flex h-3 w-[97px] items-center">
          <span className="absolute top-[5px] h-[2px] w-full border-t border-l border-[#777]" />
          <span className="absolute left-[47px] h-[10px] w-px bg-[#777]" />
          <input
            type="range"
            aria-label="Maßstab"
            min="0"
            max="100"
            defaultValue="28"
            className="relative h-3 w-full appearance-none bg-transparent [&::-webkit-slider-thumb]:h-[9px] [&::-webkit-slider-thumb]:w-[8px] [&::-webkit-slider-thumb]:appearance-none [&::-webkit-slider-thumb]:rounded-full [&::-webkit-slider-thumb]:border [&::-webkit-slider-thumb]:border-[#2c4357] [&::-webkit-slider-thumb]:bg-[#5d86a8]"
          />
        </div>
        <button type="button" aria-label="Vergrößern">
          <Svg s={12} vb={12}>
            <circle cx="6" cy="6" r="5.300" fill="#d8effc" stroke="#3f5f7c" />
            <path d="M3 6h6M6 3v6" stroke="#1c4f7c" strokeWidth="1.500" />
          </Svg>
        </button>
      </div>
      <div className={cell + "w-10 pl-[3px]"}>63 %</div>
    </footer>
  );
}

export default function App() {
  return (
    <div className="bg-white pr-[2px] font-['Noto_Sans','Open_Sans',sans-serif] text-[11px] leading-[16px] text-black">
      <Defs />
      <div className="flex min-h-screen flex-col bg-[#f0f0f0]">
        <TitleBar />
        <MenuBar />
        <Toolbars />
        <main className="flex flex-1">
          <Editor />
          <Sidebar />
        </main>
        <DrawBar />
        <StatusBar />
      </div>
    </div>
  );
}
